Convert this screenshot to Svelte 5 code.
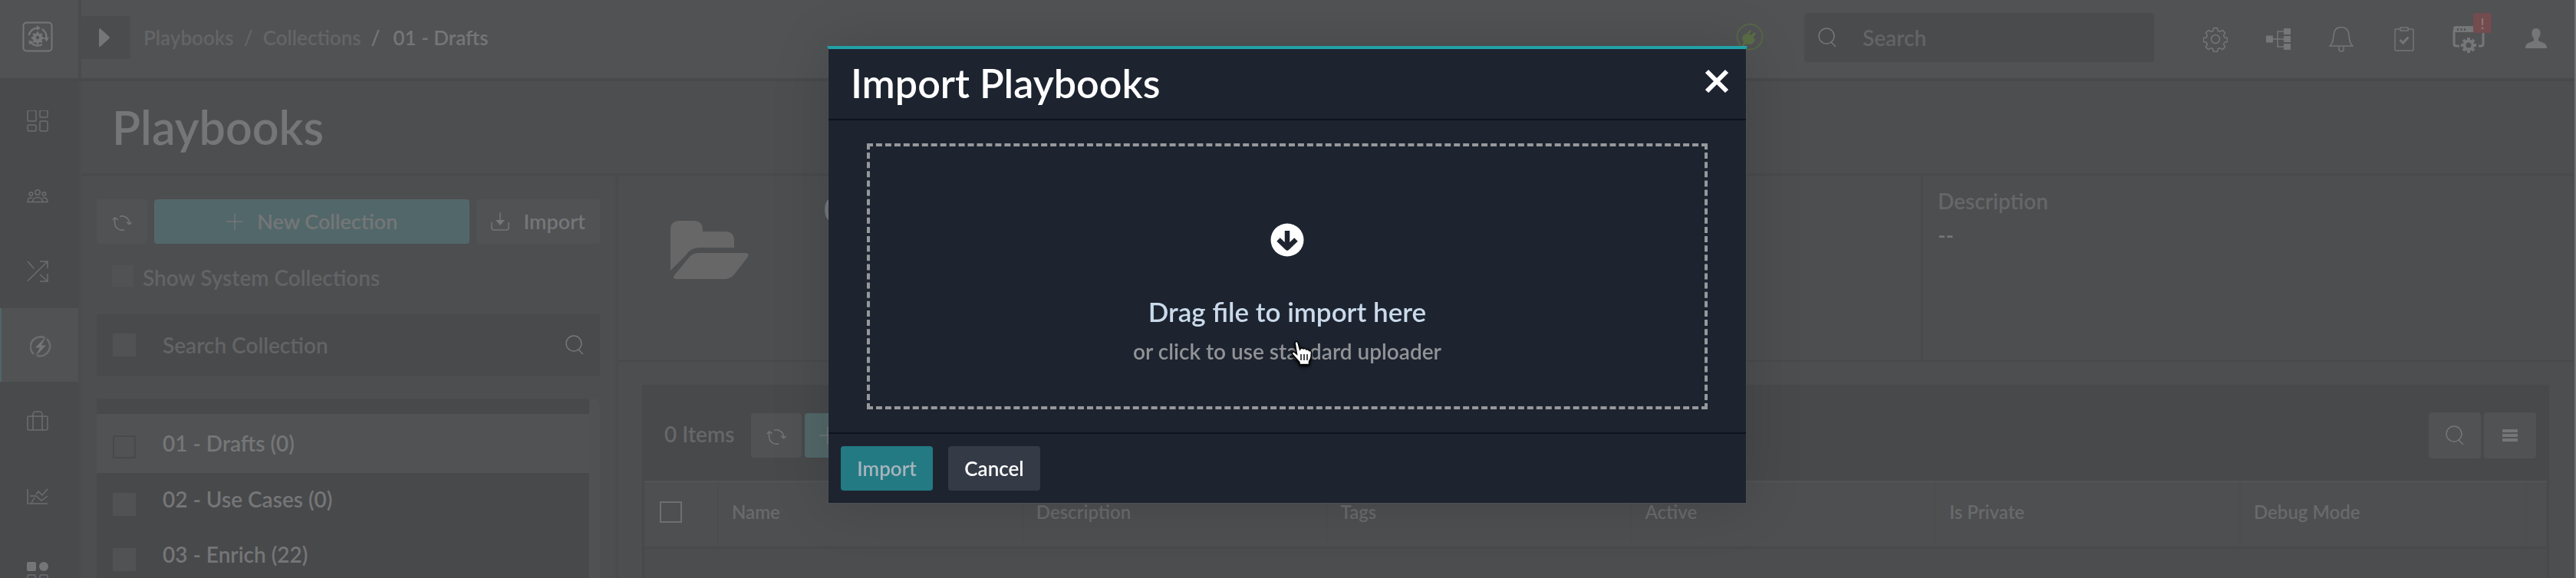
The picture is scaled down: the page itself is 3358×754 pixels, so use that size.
<script>
  const collections = [
    { name: '01 - Drafts', count: 0, selected: true },
    { name: '02 - Use Cases', count: 0 },
    { name: '03 - Enrich', count: 22 }
  ];
  const columns = ['Name', 'Description', 'Tags', 'Active', 'Is Private', 'Debug Mode'];
  const nav = ['Dashboard', 'Teams', 'Incident Response', 'Automation', 'Resources', 'Reports', 'Widgets'];
  const gear =
    'M13.6 2.5h4.8l.9 3.8 2.6 1.1 3.3-2 3.4 3.4-2 3.3 1.1 2.6 3.8.9v4.8l-3.8.9-1.1 2.6 2 3.3-3.4 3.4-3.3-2-2.6 1.1-.9 3.8h-4.8l-.9-3.8-2.6-1.1-3.3 2-3.4-3.4 2-3.3-1.1-2.6-3.8-.9v-4.8l3.8-.9 1.1-2.6-2-3.3 3.4-3.4 3.3 2 2.6-1.1z';
</script>

{#snippet magnifier()}
  <svg class="icon" viewBox="0 0 24 26" width="24" height="26"><circle cx="11" cy="11" r="10" /><path d="M17 19l6 6" /></svg>
{/snippet}

{#snippet refresh()}
  <svg class="icon" viewBox="0 0 26 22" width="26" height="22">
    <path d="M10 2.4a9.5 9.5 0 0 1 12.6 8.6v1.6M16 19.8A9.5 9.5 0 0 1 3.6 11V5.5" />
    <path d="M19 9.5l3.6 3 3-2.5M1 7l2.7-3 4 2.6" />
  </svg>
{/snippet}

{#snippet plus()}
  <svg class="icon" viewBox="0 0 22 22" width="22" height="22"><path d="M11 0v22M0 11h22" /></svg>
{/snippet}

<div class="app">
  <header class="topbar">
    <a class="logo" href="#home" aria-label="Home">
      <svg class="icon" viewBox="0 0 40 40" width="40" height="40">
        <rect x="1.500" y="1.500" width="37" height="37" rx="4" stroke-width="2" />
        <path d="M8.700 18A11.500 11.500 0 0 1 20 8.500M25.800 10A11.500 11.500 0 0 1 31.300 22M25.800 30A11.500 11.500 0 0 1 11.200 27.400" stroke-width="2.500" />
        <path class="fill" d="M19 5l5 3.500-5 3.500zM28 21h7l-3.500 5.500zM14 26l-5.500-1.500.5 6z" />
        <path class="fill" d="M18.800 13.500h2.400l.4 2 1.500.7 1.800-1.200 1.700 1.700-1.200 1.800.7 1.500 2 .4v2.400l-2 .4-.7 1.500 1.200 1.800-1.700 1.700-1.800-1.200-1.500.7-.4 2h-2.400l-.4-2-1.500-.7-1.800 1.200-1.700-1.700 1.200-1.800-.7-1.500-2-.4v-2.400l2-.4.700-1.500-1.200-1.800 1.700-1.700 1.800 1.200 1.500-.7z" />
        <circle class="hole" cx="20" cy="21" r="2.200" />
      </svg>
    </a>
    <button class="expand" aria-label="Expand navigation">
      <svg viewBox="0 0 14 26" width="14" height="26"><path class="fill" d="M0 2.500Q0 0 2 1.500L13 11.500Q14.500 13 13 14.500L2 24.500Q0 26 0 23.500z" /></svg>
    </button>
    <nav class="crumbs" aria-label="Breadcrumb">
      <a href="#playbooks">Playbooks</a><span>/</span><a href="#collections">Collections</a><b>/</b><b class="here">01 - Drafts</b>
    </nav>
    <div class="status" title="Connected">
      <svg viewBox="0 0 36 38" width="36" height="38">
        <circle cx="18" cy="18" r="16.500" fill="none" stroke="#566747" stroke-width="2" />
        <path fill="#5b6d46" d="M7 31l3-6c-3-4-2-8 1-10l3-1 4-5 2 1-3 5 2 1 5-4 2 2-4 5 3 2c-1 5-5 8-9 7l-3-1-3 4z" />
      </svg>
    </div>
    <label class="search">
      {@render magnifier()}
      <input type="search" placeholder="Search" aria-label="Search" />
    </label>
    <div class="tools">
      <button aria-label="Settings">
        <svg class="icon" viewBox="0 0 32 34" width="32" height="34"><path d={gear} stroke-linejoin="round" /><circle cx="16" cy="17" r="5.500" /></svg>
      </button>
      <button aria-label="Workflows">
        <svg class="icon" viewBox="0 0 32 30" width="32" height="30">
          <path d="M8 15h16M24 5h-9v20h9" />
          <path class="fill" d="M0 10.500h9v9H0zM23 1h9v8h-9zM23 11h9v8h-9zM23 21h9v8h-9z" />
        </svg>
      </button>
      <button aria-label="Notifications">
        <svg class="icon" viewBox="0 0 32 34" width="32" height="34">
          <path d="M1 26c4-3 4.500-8 5-14C6.500 5 10 1.500 16 1.500S25.500 5 26 12c.5 6 1 11 5 14zM13 27v3a3 3 0 0 0 6 0v-3" />
        </svg>
      </button>
      <button aria-label="Tasks">
        <svg class="icon" viewBox="0 0 28 34" width="28" height="34">
          <path d="M9 4H3.500Q2 4 2 5.500v25Q2 32 3.500 32h21q1.500 0 1.500-1.500v-25Q26 4 24.500 4H19M9 2h10v4H9z" />
          <path d="M8.500 18l4 4 7-7.500" stroke-width="3" />
        </svg>
      </button>
      <button class="alert" aria-label="System alerts">
        <svg class="icon" viewBox="0 0 42 38" width="42" height="38">
          <path d="M2 8v17q0 3 3 3h4M40 8v17q0 3-3 3h-3" stroke-width="3" />
          <path class="fill" d="M1 10V5q0-3 3-3h34q3 0 3 3v5z" />
          <path d="M6 6.500h2M10.500 6.500h2M15 6.500h2" stroke="#515254" stroke-width="3" />
          <circle cx="21" cy="27" r="5.500" stroke-width="4" />
          <path d="M21 17v4M21 33v4M11 27h4M27 27h4M14 20l2.500 2.500M28 20l-2.500 2.500M14 34l2.500-2.500M28 34l-2.500-2.500" stroke-width="4" />
        </svg>
        <span class="badge">!</span>
      </button>
      <button aria-label="Profile">
        <svg viewBox="0 0 28 28" width="28" height="28"><path class="fill" d="M14 0c4 0 6 3 5.500 7 0 3-1.500 5-2.500 6v3c2 2 11 2 11 9v1H0v-1c0-7 9-7 11-9v-3C10 12 8.500 10 8.500 7 8 3 10 0 14 0z" /></svg>
      </button>
    </div>
  </header>

  <nav class="rail" aria-label="Main">
    {#each nav as item, i}
      <a href="#{item}" class:active={i === 3} aria-label={item}>
        <svg class="icon" viewBox="0 0 28 28" width="28" height="28">
          {#if i === 0}
            <rect x="1" y="0" width="11" height="14" rx="1.500" /><rect x="17" y="0" width="10" height="9" rx="1.500" />
            <rect x="1" y="19" width="11" height="8" rx="1.500" /><rect x="17" y="14" width="10" height="13" rx="1.500" />
          {:else if i === 1}
            <circle cx="14" cy="9" r="3.200" /><circle cx="5.500" cy="11" r="2.300" /><circle cx="22.500" cy="11" r="2.300" />
            <path d="M7.500 21.500c0-8 13-8 13 0zM7 21.500H1c0-5 2.500-6.500 6.500-5M21 21.500h6c0-5-2.500-6.500-6.500-5" />
          {:else if i === 2}
            <path d="M1 1l8.500 9.500M1 26.500L27 1M17 1h10v9M17 18l10 9M17 27h10V17" />
          {:else if i === 3}
            <path d="M19 2.500A13 13 0 0 0 5 24M9.500 26A13 13 0 0 0 22 4" stroke-width="2.500" />
            <path class="fill" d="M21 1L7 15.500h6L7 27l14-14.500h-6z" />
          {:else if i === 4}
            <rect x="1" y="7" width="26" height="18" rx="2" /><path d="M8 25V5q0-4 4-4h4q4 0 4 4v20" />
          {:else if i === 5}
            <path d="M1 4v19h26M12 11l3-4 5 5 7-8M4 13h8l7 6 8-6M6 22l4-7" />
          {:else}
            <rect class="fill" x="0" y="1" width="12" height="12" rx="2" /><circle class="fill" cx="22" cy="7" r="6" />
            <rect x="1" y="18" width="10" height="10" rx="1.500" /><rect x="17" y="18" width="10" height="10" rx="1.500" />
          {/if}
        </svg>
      </a>
    {/each}
  </nav>

  <main>
    <div class="title"><h1>Playbooks</h1></div>

    <div class="body">
      <aside>
        <div class="actions">
          <button class="btn square" aria-label="Refresh collections">{@render refresh()}</button>
          <button class="btn teal">{@render plus()}New Collection</button>
          <button class="btn">
            <svg class="icon" viewBox="0 0 24 24" width="24" height="24"><path d="M12 0v14M1 13v7q0 3 3 3h16q3 0 3-3v-7" /><path class="fill" d="M6 10h12l-6 7z" /></svg>
            Import
          </button>
        </div>
        <label class="system"><input type="checkbox" />Show System Collections</label>
        <div class="filter">
          <input type="checkbox" aria-label="Select all collections" />
          <input type="text" placeholder="Search Collection" aria-label="Search Collection" />
          {@render magnifier()}
        </div>
        <div class="list">
          <ul>
            {#each collections as c}
              <li class:selected={c.selected}>
                <label><input type="checkbox" />{c.name} ({c.count})</label>
              </li>
            {/each}
          </ul>
          <div class="thumb"></div>
        </div>
      </aside>

      <section class="content">
        <div class="detail">
          <div class="folder">
            <svg viewBox="0 0 102 76" width="102" height="76">
              <path class="fill" d="M0 12Q0 0 12 0H30Q42 0 42 12V14H71Q83 14 83 26V35H38Q26 35 20 45L0 65z" />
              <path class="fill" d="M25 47Q29 42 37 42H98Q103 42 101 47L84 69Q79 76 70 76H8Q2 76 5 71z" />
            </svg>
          </div>
          <h2>01 - Drafts</h2>
          <dl><dt>Description</dt><dd>--</dd></dl>
        </div>

        <div class="grid">
          <div class="toolbar">
            <span>0 Items</span>
            <button class="btn square" aria-label="Refresh playbooks">{@render refresh()}</button>
            <button class="btn teal add">{@render plus()}Add Playbook</button>
            <button class="btn tall search-btn" aria-label="Search playbooks">{@render magnifier()}</button>
            <button class="btn tall" aria-label="Grid menu">
              <svg viewBox="0 0 20 18" width="20" height="18"><path class="fill" d="M0 1h20v4H0zM0 7h20v4H0zM0 13h20v4H0z" /></svg>
            </button>
          </div>
          <table>
            <colgroup><col class="c-check" /><col /><col /><col /><col /><col /><col class="c-last" /><col class="c-end" /></colgroup>
            <thead>
              <tr>
                <th class="check"><input type="checkbox" aria-label="Select all playbooks" /></th>
                {#each columns as col}<th>{col}</th>{/each}
                <th></th>
              </tr>
            </thead>
          </table>
        </div>
      </section>
    </div>
  </main>
</div>

<div class="layer">
  <div class="modal" role="dialog" aria-modal="true" aria-labelledby="modal-title">
    <div class="modal-head">
      <h2 id="modal-title">Import Playbooks</h2>
      <button class="close" aria-label="Close"><svg viewBox="0 0 32 32" width="32" height="32"><path d="M3 3l26 26M29 3L3 29" /></svg></button>
    </div>
    <div class="modal-body">
      <button class="drop">
        <svg viewBox="0 0 44 44" width="44" height="44">
          <circle cx="22" cy="22" r="21.500" fill="#fff" />
          <path d="M22 10v20M10.500 21.500L22 32.500l11.500-11" fill="none" stroke="#1d2430" stroke-width="6.500" stroke-linejoin="round" />
        </svg>
        <strong>Drag file to import here</strong>
        <span>or click to use standard uploader
          <svg class="cursor" viewBox="0 0 30 34" width="30" height="34">
            <path d="M6 3Q8 0 10 3l2.500 9Q15 8.500 17 11q2-1.500 4 1 2.500-1 3.500 1.500 3-.5 3 3 0 7-3 11v4H12v-3L2.500 18Q2 14.500 5 15l3.500 3z" fill="#fff" stroke="#000" stroke-width="1.500" />
            <path d="M14 18v8M18 18v8M22 18v8" stroke="#111" stroke-width="1.500" />
          </svg>
        </span>
      </button>
    </div>
    <div class="modal-foot">
      <button class="primary">Import</button>
      <button>Cancel</button>
    </div>
  </div>
</div>

<style>
  :global(body) {
    overflow: hidden;
    background: #4d4e50;
  }
  .app,
  .layer {
    font: 600 28px/32px Lato, sans-serif;
    color: #757678;
  }
  .app *,
  .layer * {
    box-sizing: border-box;
  }
  .app {
    display: grid;
    grid-template-columns: 106px 1fr;
    grid-template-rows: 106px 1fr;
    box-sizing: border-box;
    height: 100vh;
    border-right: 2px solid #747474;
    overflow: hidden;
  }
  button,
  input {
    margin: 0;
    padding: 0;
    border: 0;
    background: none;
    color: inherit;
    font: inherit;
  }
  input[type='checkbox'] {
    appearance: none;
    flex: none;
    width: 30px;
    height: 30px;
    background: #515254;
  }
  input::placeholder {
    color: #636466;
    opacity: 1;
  }
  a {
    color: inherit;
    text-decoration: none;
  }
  h1,
  h2,
  dl,
  dd,
  ul {
    margin: 0;
    padding: 0;
    font-weight: inherit;
  }
  svg {
    display: block;
    flex: none;
  }
  .icon {
    fill: none;
    stroke: #757678;
    stroke-width: 1.5;
  }
  .fill {
    fill: #757678;
    stroke: none;
  }
  .hole {
    fill: #515254;
    stroke: none;
  }

  .topbar {
    grid-column: 1 / 3;
    display: flex;
    align-items: center;
    padding-bottom: 4px;
    border-bottom: 4px solid #49494b;
    background: #515254;
  }
  .logo {
    display: grid;
    place-items: center;
    align-self: stretch;
    width: 106px;
    margin-bottom: -4px;
    padding: 0 4px 6px 0;
    border-right: 4px solid #4a4b4d;
  }
  .expand {
    display: grid;
    place-items: center;
    width: 64px;
    height: 56px;
    padding-right: 4px;
    border-radius: 0 4px 4px 0;
    background: #4b4c4e;
  }
  .crumbs {
    display: flex;
    flex: 1;
    gap: 13px;
    padding-left: 17px;
    font-size: 26px;
    white-space: nowrap;
    color: #646567;
  }
  .crumbs b {
    font-weight: inherit;
    color: #757678;
  }
  .crumbs .here {
    padding-left: 4px;
  }
  .status {
    margin-right: 53px;
  }
  .search {
    display: flex;
    align-items: center;
    gap: 34px;
    width: 456px;
    height: 64px;
    padding-left: 18px;
    border-radius: 4px;
    background: #4a4b4d;
  }
  .search input {
    flex: 1;
    min-width: 0;
  }
  .tools {
    display: grid;
    grid-template-columns: repeat(4, 82px) 86px 90px;
    padding: 4px 5px 0 39px;
    justify-items: center;
    align-items: center;
  }
  .alert {
    position: relative;
  }
  .badge {
    position: absolute;
    top: -15px;
    right: -9px;
    width: 24px;
    height: 26px;
    border-radius: 3px;
    background: #724c4e;
    font-size: 20px;
    line-height: 26px;
    color: #8c7678;
  }

  .rail {
    display: flex;
    flex-direction: column;
    gap: 2px;
    padding: 0 4px 0 0;
    background: linear-gradient(90deg, #494a4c, #494a4c 102px, #4b4c4e 102px);
    min-height: 0;
    overflow: hidden;
  }
  .rail a {
    display: grid;
    flex: none;
    place-items: center;
    height: 96px;
    padding: 4px 4px 0 0;
  }
  .rail a:first-child {
    margin-top: 2px;
  }
  .rail a.active {
    padding-left: 6px;
    border-left: 2px solid #4f6668;
    background: #515254;
  }
  .rail .icon {
    stroke: #6b6d70;
  }

  main {
    display: flex;
    flex-direction: column;
    min-width: 0;
    min-height: 0;
  }
  .title {
    padding: 26px 40px 26px;
    border-bottom: 4px solid #494a4c;
  }
  .title h1 {
    font-size: 61px;
    line-height: 68px;
  }
  .body {
    display: flex;
    flex: 1;
    min-height: 0;
  }
  aside {
    display: flex;
    flex: none;
    flex-direction: column;
    width: 700px;
    padding: 30px 20px 0;
    border-right: 4px solid #4a4b4d;
  }
  .actions {
    display: flex;
    gap: 9px;
  }
  .btn {
    display: flex;
    align-items: center;
    justify-content: center;
    gap: 18px;
    height: 58px;
    padding: 0 19px;
    border-radius: 4px;
    background: #515254;
    font-size: 27px;
    white-space: nowrap;
  }
  .btn.square {
    width: 66px;
    padding: 4px 0 0;
  }
  .teal {
    flex: 1;
    background: #526769;
  }
  .system {
    display: flex;
    gap: 12px;
    padding: 28px 20px 0;
    color: #636466;
  }
  .system input[type='checkbox'] {
    width: 28px;
    height: 28px;
  }
  .filter {
    display: flex;
    align-items: center;
    gap: 35px;
    height: 80px;
    margin: 32px 0 30px;
    padding: 0 21px;
    background: #494a4c;
  }
  .filter input[type='text'] {
    flex: 1;
  }
  .list {
    display: flex;
    flex: 1;
    min-height: 0;
  }
  .list ul {
    flex: 1;
    padding-top: 20px;
    background: #48494b;
    list-style: none;
    overflow: hidden;
  }
  .list label {
    display: flex;
    gap: 35px;
    height: 72px;
    padding: 18px 21px;
  }
  .list input {
    margin-top: 8px;
  }
  .list .selected {
    background: #515254;
  }
  .list .selected label {
    height: 77px;
    padding-top: 22px;
  }
  .list .selected input {
    margin-top: 6px;
    border: 2px solid #48494b;
  }
  .thumb {
    width: 14px;
    border-radius: 7px 7px 0 0;
    background: #505153;
  }

  .content {
    flex: 1;
    display: flex;
    flex-direction: column;
    min-width: 0;
  }
  .detail {
    display: grid;
    grid-template-columns: 268px 1fr 852px;
    height: 242px;
    border-bottom: 2px solid #48494b;
  }
  .folder {
    padding: 58px 0 0 68px;
  }
  .folder .fill {
    fill: #676767;
  }
  .detail h2 {
    padding-top: 18px;
    font-size: 42px;
    line-height: 50px;
  }
  .detail dl {
    padding: 16px 20px;
    border-left: 2px solid #48494b;
    color: #666769;
  }
  .detail dd {
    margin-top: 12px;
    color: #757678;
  }
  .grid {
    flex: 1;
    margin: 30px 33px 0 31px;
    padding: 0 3px;
    background: linear-gradient(90deg, #48494b, #48494b 3px, #4c4d4f 3px, #4c4d4f calc(100% - 3px), #48494b calc(100% - 3px));
  }
  .toolbar {
    display: flex;
    align-items: center;
    gap: 4px;
    height: 125px;
    padding: 6px 14px 0 26px;
    background: #48494b;
    color: #666769;
  }
  .toolbar span {
    margin-right: 18px;
    padding-bottom: 4px;
  }
  .toolbar .add {
    flex: none;
  }
  .search-btn {
    margin-left: auto;
  }
  .btn.tall {
    width: 68px;
    height: 60px;
    padding: 0;
  }
  table {
    width: 100%;
    border-spacing: 0;
    border-top: 2px solid #525355;
    table-layout: fixed;
  }
  .c-check {
    width: 97px;
  }
  .c-last {
    width: 373px;
  }
  .c-end {
    width: 26px;
  }
  th {
    height: 87px;
    padding: 0 0 6px 17px;
    border-right: 2px solid #4c4d4f;
    border-bottom: 3px solid #48494b;
    background: #4e4f51;
    font-weight: inherit;
    font-size: 24px;
    text-align: left;
    color: #696a6c;
  }
  .check {
    padding-left: 20px;
  }
  th input[type='checkbox'] {
    display: block;
    width: 29px;
    height: 28px;
    border: 2px solid #6d6e70;
    background: none;
  }

  .layer {
    position: fixed;
    inset: 0;
    display: flex;
    align-items: flex-start;
    justify-content: center;
    padding: 60px 2px 0 0;
  }
  .modal {
    width: 1200px;
    border: 2px solid transparent;
    border-top: 4px solid #23a1a8;
    background: #1d2430 padding-box;
    box-shadow: 0 0 70px rgba(0, 0, 0, 0.14);
  }
  .modal-head {
    display: flex;
    justify-content: space-between;
    padding: 16px 22px 19px 29px;
    border-bottom: 2px solid #0e131d;
    color: #fff;
  }
  .modal-head h2 {
    font-size: 52px;
    line-height: 56px;
  }
  .close {
    align-self: flex-start;
    margin-top: 10px;
  }
  .close path {
    stroke: #fff;
    stroke-width: 6;
  }
  .modal-body {
    padding: 30px 50px;
  }
  .drop {
    display: flex;
    flex-direction: column;
    align-items: center;
    width: 100%;
    height: 347px;
    padding-top: 100px;
    border: 4px dashed #97989b;
    cursor: pointer;
  }
  .drop strong {
    margin-top: 51px;
    font-weight: inherit;
    font-size: 35px;
    line-height: 40px;
    color: #cadaeb;
  }
  .drop span {
    position: relative;
    margin-top: 16px;
    color: #929396;
  }
  .cursor {
    position: absolute;
    top: 2px;
    left: 51%;
    filter: drop-shadow(0 2px 2px #000);
  }
  .modal-foot {
    display: flex;
    gap: 20px;
    padding: 16px;
    border-top: 2px solid #0e131d;
  }
  .modal-foot button {
    width: 120px;
    height: 58px;
    border-radius: 4px;
    background: #343b47;
    font-size: 26px;
    color: #fff;
  }
  .modal-foot .primary {
    background: #237a83;
    color: #a7b4bd;
  }
</style>
